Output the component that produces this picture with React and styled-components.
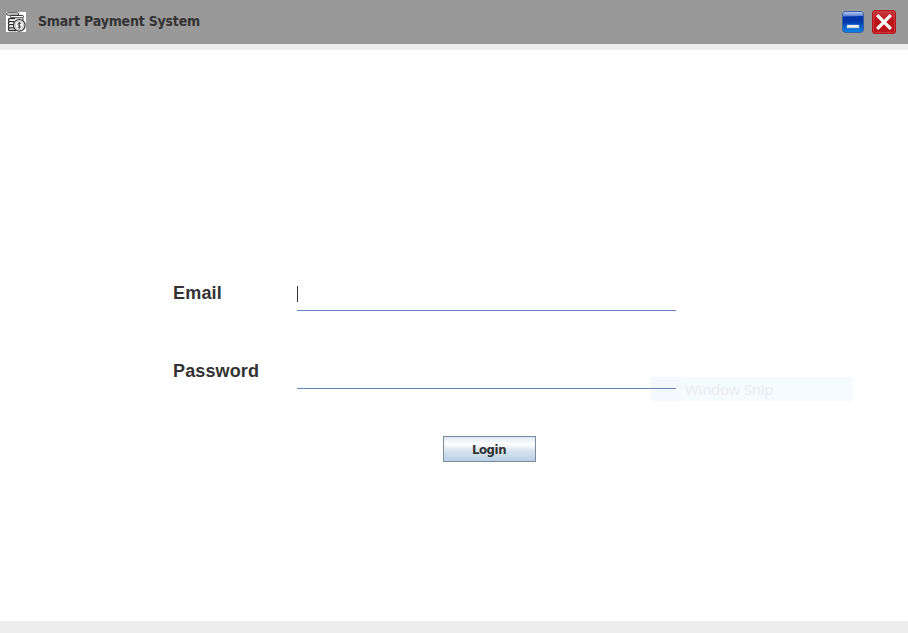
import React from "react";
import styled, { createGlobalStyle } from "styled-components";

const GlobalStyle = createGlobalStyle`
  * { box-sizing: border-box; }
  body { margin: 0; background: #ededed; overflow: hidden; }
`;

const Window = styled.div`
  position: relative;
  width: 908px;
  height: 633px;
  display: flex;
  flex-direction: column;
  background: #ededed;
  color: #333;
`;

const TitleBar = styled.header`
  height: 44px;
  display: flex;
  align-items: center;
  padding: 0 12px 0 6px;
  background: #999;
`;

const Title = styled.h1`
  margin: 0 auto 0 12px;
  padding-bottom: 3px;
  font: bold 14px/18px "DejaVu Sans Condensed", "DejaVu Sans", sans-serif;
  font-stretch: condensed;
  letter-spacing: -0.2px;
  white-space: nowrap;
`;

const WindowButton = styled.button`
  width: 24px;
  height: 24px;
  margin-left: ${(p) => p.$gap || 0}px;
  padding: 0;
  border: 0;
  background: none;
  display: block;
  svg { display: block; }
`;

const Panel = styled.main`
  height: 571px;
  margin-top: 6px;
  padding: 226px 0 0 173px;
  background: #fff;
`;

const Form = styled.form`
  width: 503px;
  display: flex;
  flex-direction: column;
  gap: 43px;
`;

const Row = styled.div`
  display: grid;
  grid-template-columns: 124px 379px;
  height: 35px;
`;

const Label = styled.label`
  padding-top: 6px;
  font: bold 18px/22px "Liberation Sans", Arial, sans-serif;
  letter-spacing: ${(p) => p.$tracking || 0}px;
`;

const Field = styled.div`
  position: relative;
  z-index: 1;
  display: flex;
  align-items: flex-start;
  padding-top: 10px;
  border-bottom: 1px solid #6382bf;
`;

const Caret = styled.span`
  width: 1px;
  height: 16px;
  background: #333;
`;

const LoginButton = styled.button`
  width: 93px;
  height: 26px;
  margin: 4px 0 0 270px;
  padding: 1px 1px 0 0;
  border: 1px solid #7a8a99;
  border-radius: 0;
  background: linear-gradient(#dde8f3 0%, #fff 30%, #dce7f1 52%, #b8cfe5 100%);
  color: #333;
  font: bold 13px/18px "DejaVu Sans Condensed", "DejaVu Sans", sans-serif;
  font-stretch: condensed;
  letter-spacing: -0.4px;
`;

const SnipHint = styled.div`
  position: absolute;
  left: 651px;
  top: 377px;
  width: 202px;
  height: 24px;
  padding-left: 34px;
  background: linear-gradient(90deg, #f5f9ff 30px, #f5fbff 30px);
  color: #ebebeb;
  font: 15px/24px "Open Sans", "Noto Sans", sans-serif;
  letter-spacing: -0.25px;
  white-space: nowrap;
`;

function PaymentIcon() {
  return (
    <svg width="20" height="20" viewBox="0 0 20 20" fill="none" stroke="#303030" strokeWidth="1">
      <rect width="20" height="20" fill="#fff" stroke="none" />
      <rect x="0.6" y="0.8" width="12" height="2.4" rx="1.2" />
      <rect x="4.5" y="3.4" width="13" height="2.4" rx="1.2" />
      <path d="M9 6.5H4a1.5 1.5 0 0 0 0 3.1h4.5M8 9.6H4a1.5 1.5 0 0 0 0 3.1h3.5M7.5 12.7H4a1.5 1.5 0 0 0 0 3.1h4M2.5 15.8v1.4q0 1.3 1.5 1.3h6" strokeWidth="1.3" />
      <path d="M17 6.3v2" />
      <circle cx="13.3" cy="13.3" r="5.8" fill="#fff" strokeWidth="1.2" />
      <circle cx="13.3" cy="13.3" r="4.2" stroke="#8b8b8b" strokeWidth="0.6" />
      <path d="M15 11.8q-1.3-1.2-2.8-.4-1.1 1 .2 1.7l1.7.5q1.5.8.3 1.7-1.3.8-2.9-.4M13.3 10v6.8" strokeWidth="0.9" />
    </svg>
  );
}

function MinimizeIcon() {
  return (
    <svg width="24" height="24" viewBox="0 0 24 24">
      <defs>
        <linearGradient id="blue" x2="0" y2="1">
          <stop offset="0" stopColor="#083bb0" />
          <stop offset="0.45" stopColor="#0335a9" />
          <stop offset="1" stopColor="#0e86ee" />
        </linearGradient>
        <linearGradient id="gloss" x2="0" y2="1">
          <stop offset="0" stopColor="#b6c8f5" />
          <stop offset="1" stopColor="#5276cf" />
        </linearGradient>
      </defs>
      <rect x="1.5" y="1.5" width="21" height="21" rx="3.5" fill="url(#blue)" stroke="#385f9f" />
      <path d="M2 6.5V4q0-2 2-2h16q2 0 2 2v2Q12 6 2 6.5Z" fill="url(#gloss)" />
      <rect x="6" y="15" width="12" height="3" fill="#fff" stroke="#8eaed6" strokeWidth="0.5" />
      <path d="M6.5 17.3h11" stroke="#ccc9bf" />
    </svg>
  );
}

function CloseIcon() {
  return (
    <svg width="24" height="24" viewBox="0 0 24 24">
      <defs>
        <linearGradient id="red" x2="0" y2="1">
          <stop offset="0" stopColor="#c83a3e" />
          <stop offset="0.5" stopColor="#bb1219" />
          <stop offset="1" stopColor="#be141b" />
        </linearGradient>
      </defs>
      <rect x="0.5" y="0.5" width="23" height="23" rx="2.5" fill="url(#red)" stroke="#b51219" />
      <rect x="1.5" y="1.5" width="21" height="21" rx="2" fill="none" stroke="#d24a4f" strokeOpacity="0.6" />
      <path d="M5.2 5.2l13.6 13.6M18.8 5.2l-13.6 13.6" stroke="#fff" strokeWidth="3.2" />
    </svg>
  );
}

export default function App() {
  return (
    <>
      <GlobalStyle />
      <Window>
        <TitleBar>
          <PaymentIcon />
          <Title>Smart Payment System</Title>
          <WindowButton aria-label="Minimize"><MinimizeIcon /></WindowButton>
          <WindowButton aria-label="Close" $gap={7}><CloseIcon /></WindowButton>
        </TitleBar>
        <Panel>
          <Form>
            <Row>
              <Label $tracking={0.2}>Email</Label>
              <Field><Caret /></Field>
            </Row>
            <Row>
              <Label $tracking={0.13}>Password</Label>
              <Field />
            </Row>
            <LoginButton type="button">Login</LoginButton>
          </Form>
        </Panel>
        <SnipHint>Window Snip</SnipHint>
      </Window>
    </>
  );
}
